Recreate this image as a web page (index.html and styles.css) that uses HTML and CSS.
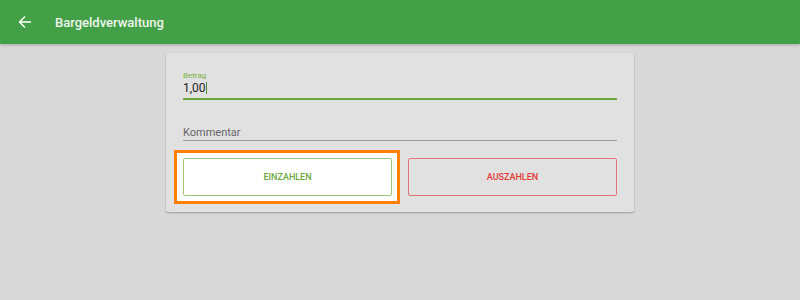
FILE: index.html
```html
<!DOCTYPE html>
<html lang="de">
<head>
    <meta charset="UTF-8">
    <title>Bargeldverwaltung</title>
    <link rel="stylesheet" href="styles.css">
</head>
<body>
    <header class="toolbar">
        <svg class="back" width="14" height="14" viewBox="0 0 14 14">
            <path d="M13 7H1.5M7 1.5L1.5 7L7 12.5" fill="none" stroke="#ffffff" stroke-width="1.4"/>
        </svg>
        <span class="title">Bargeldverwaltung</span>
    </header>

    <div class="card">
        <div class="field active">
            <label>Betrag</label>
            <div class="value">1,00<span class="caret"></span></div>
        </div>
        <div class="field">
            <div class="placeholder">Kommentar</div>
        </div>
        <div class="buttons">
            <div class="focus">
                <button class="btn btn-in">EINZAHLEN</button>
            </div>
            <button class="btn btn-out">AUSZAHLEN</button>
        </div>
    </div>
</body>
</html>
```

FILE: styles.css
```css
body {
    margin: 0;
    background-color: #d9d9d9;
    font-family: Roboto, "Noto Sans", sans-serif;
    width: 800px;
    height: 300px;
    overflow: hidden;
}
.toolbar {
    height: 44px;
    background-color: #43a047;
    display: flex;
    align-items: center;
    padding-left: 18px;
    box-shadow: 0 1px 3px rgba(0, 0, 0, 0.25);
}
.back {
    margin-right: 23px;
}
.title {
    color: #eef6ee;
    font-size: 13px;
    font-weight: 500;
}
.card {
    width: 468px;
    margin: 9px 0 0 166px;
    background-color: #e1e1e1;
    box-shadow: 0 1px 2px rgba(0, 0, 0, 0.3);
    border-radius: 2px;
    padding: 18px 17px 16px 17px;
    box-sizing: border-box;
}
.field {
    border-bottom: 1px solid #9a9a9a;
    margin-bottom: 17px;
}
.field.active {
    border-bottom: 2px solid #6aa83c;
    height: 27px;
}
.field label {
    display: block;
    color: #7cb342;
    font-size: 8px;
    line-height: 10px;
}
.value {
    font-size: 12px;
    line-height: 14px;
    color: #222222;
}
.caret {
    display: inline-block;
    width: 1px;
    height: 12px;
    background-color: #558b2f;
    vertical-align: -2px;
}
.placeholder {
    font-size: 11px;
    line-height: 15px;
    color: #666666;
    padding-top: 8px;
}
.buttons {
    display: flex;
    justify-content: space-between;
    margin-top: 15px;
}
.focus {
    margin: -8px 0 -8px -9px;
    border: 3px solid #ff8000;
    padding: 5px 5px 5px 6px;
    background-color: #ffffff;
    display: flex;
}
.btn {
    width: 209px;
    height: 38px;
    font-family: Roboto, "Noto Sans", sans-serif;
    font-size: 9px;
    font-weight: 500;
    border-radius: 2px;
    padding: 0;
}
.btn-in {
    background-color: #ffffff;
    border: 1px solid #9cc77a;
    color: #6aa83c;
}
.btn-out {
    background-color: transparent;
    border: 1px solid #e57373;
    color: #e53935;
}
```
